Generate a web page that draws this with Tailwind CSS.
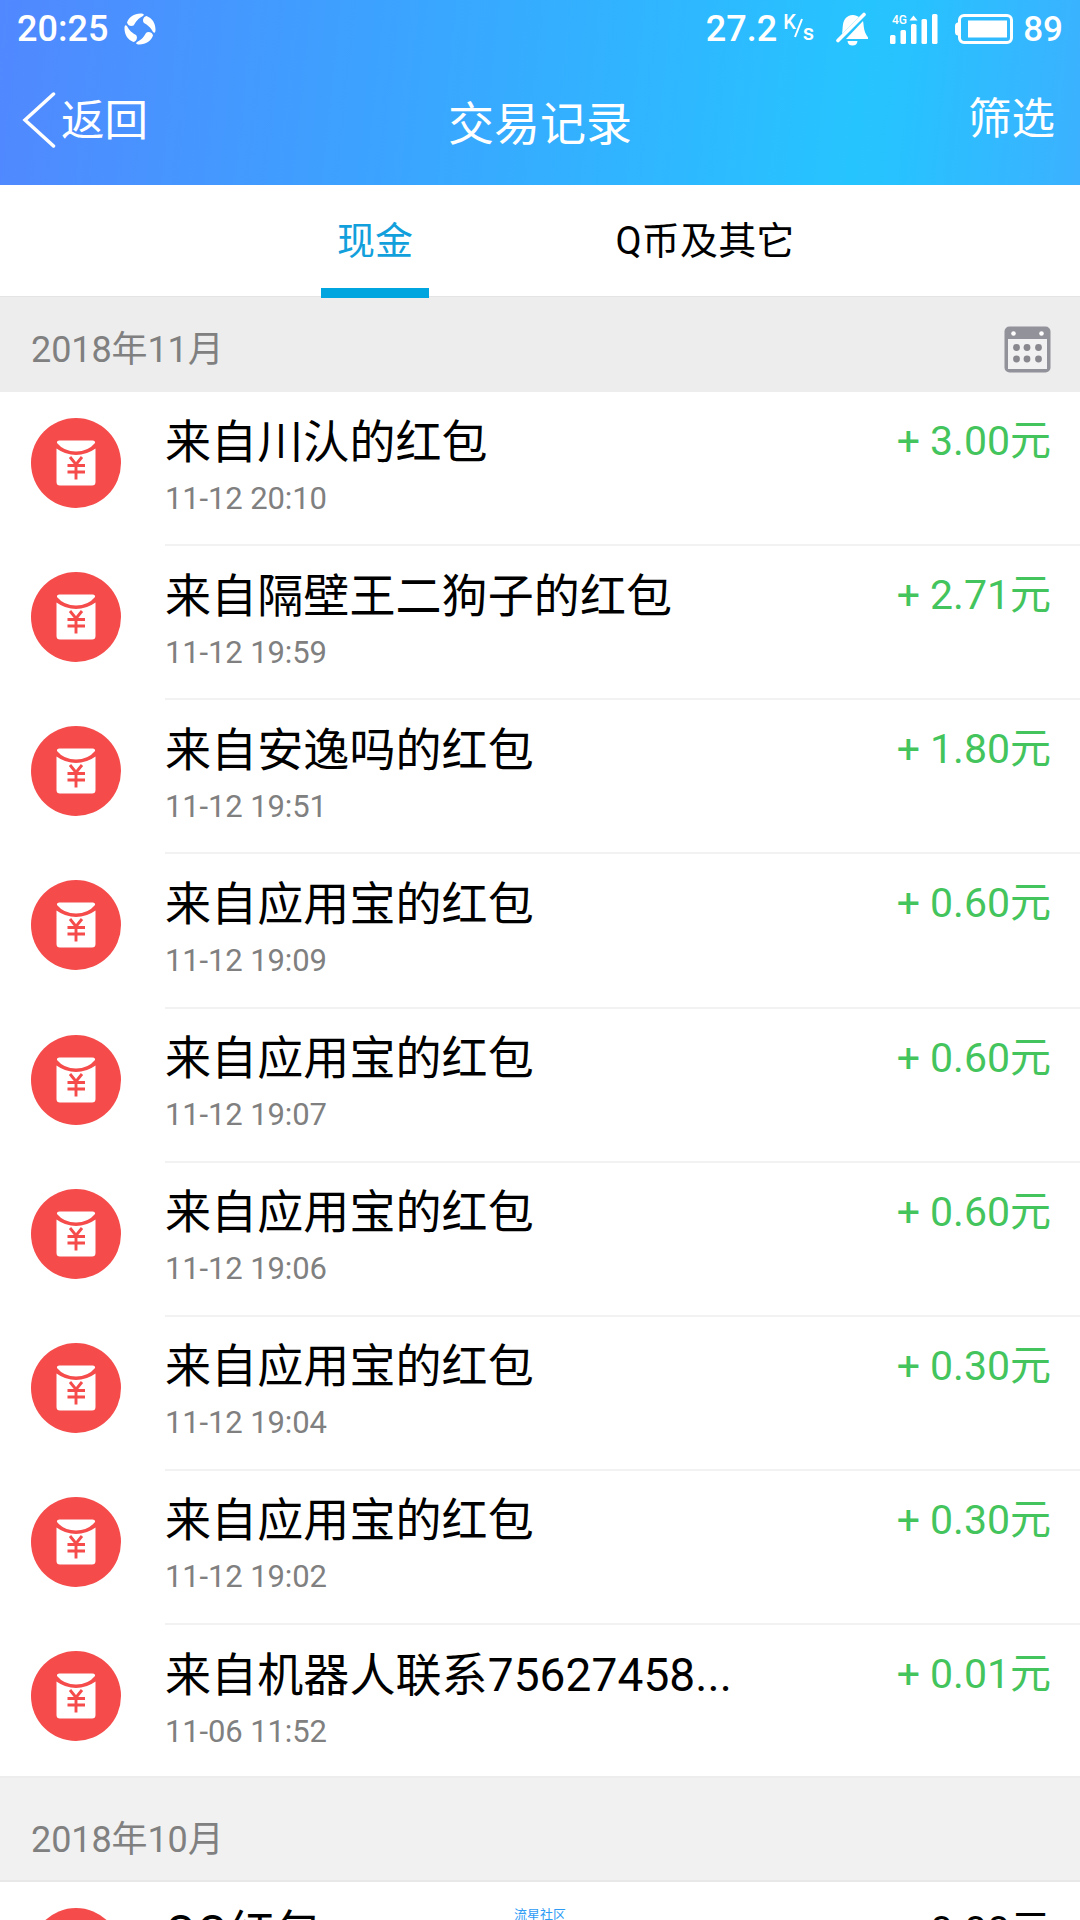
<!DOCTYPE html>
<html lang="zh-CN">
<head>
<meta charset="utf-8">
<title>交易记录</title>
<script src="https://cdn.jsdelivr.net/npm/@tailwindcss/browser@4"></script>
</head>
<body class="h-[1920px] w-[1080px] overflow-hidden bg-white font-['Roboto','Noto_Sans_CJK_SC',sans-serif] text-black">
<svg class="hidden">
  <symbol id="packet" viewBox="0 0 90 90">
    <circle cx="45" cy="45" r="45" fill="#f54b4b"/>
    <path d="M28.500 22.500h33q3 0 2.500 2.500q-7 8.500-19 8.500t-19-8.500q-.5-2.500 2.500-2.500z" fill="#fff"/>
    <path d="M25.500 30.500q9 6.500 19.500 6.500t19.500-6.500v33.500q0 3.500-3.500 3.500h-32q-3.500 0-3.500-3.500z" fill="#fff"/>
    <path d="M39 39l6 7.500l6-7.500M36.500 47.500h17.500M36.500 54h17.500M45 46v15.500" fill="none" stroke="#f54b4b" stroke-width="2.900"/>
  </symbol>
</svg>
<div class="relative flex h-full flex-col">
  <header class="flex h-[185px] shrink-0 flex-col bg-[linear-gradient(96deg,#5188ff_0%,#3da1ff_33%,#26c4ff_79%,#27c2ff_83%,#3cb1ff_100%)] text-white">
    <div class="flex h-[58px] items-center pl-[17px] pr-[18px] text-[36px] leading-none font-medium">
      <span>20:25</span>
      <svg class="ml-[16px] size-[32px]" viewBox="0 0 32 32" fill="#fff">
        <g id="blade"><path d="M3 9.500C5 4 10 .5 16.500 .5C20 .5 20.500 1.500 19 3C14 5.500 12 8.500 10 12C8.500 13.500 4 13.500 3 9.500z"/></g>
        <use href="#blade" transform="rotate(90 16 16)"/><use href="#blade" transform="rotate(180 16 16)"/><use href="#blade" transform="rotate(270 16 16)"/>
      </svg>
      <span class="ml-auto">27.2</span>
      <span class="ml-[6px] flex h-[32px] w-[34px] text-[20px]">
        <span class="-mt-px">K</span>
        <svg class="-ml-[2px] mt-[5px] h-[20px] w-[9px] shrink-0" viewBox="0 0 9 20"><path d="M8 1L1 19" stroke="#fff" stroke-width="2"/></svg>
        <span class="mt-[9px] text-[22px]">s</span>
      </span>
      <svg class="ml-[19px] h-[34px] w-[34px]" viewBox="0 0 34 34" fill="#fff">
        <path d="M6 22C7 18 6 11 9 7C12 3 17 2 21 4L23 5zM27 9C28 13 27 19 32 25.500V27H10z"/>
        <path d="M2 28.500L28 2.500" stroke="#fff" stroke-width="3.600" stroke-linecap="round"/>
        <path d="M11.500 29h10q-.5 4.500-5 4.500t-5-4.500z"/>
      </svg>
      <svg class="ml-[20px] h-[32px] w-[48px]" viewBox="0 0 48 32" fill="#fff">
        <rect x="0" y="22" width="5.500" height="9" rx="1.500"/><rect x="10.500" y="17" width="5.500" height="14" rx="1.500"/><rect x="21" y="11" width="5.500" height="20" rx="1.500"/><rect x="31.500" y="6" width="5.500" height="25" rx="1.500"/><rect x="42" y="1" width="5.500" height="30" rx="1.500"/>
        <path d="M19.500 7.500L23.500 2.500L27.500 7.500z"/>
        <text x="2" y="11" font-size="12.500" font-weight="500" textLength="15" lengthAdjust="spacingAndGlyphs">4G</text>
      </svg>
      <svg class="ml-[17px] h-[30px] w-[58px]" viewBox="0 0 58 30">
        <rect x="4.500" y="1.500" width="52" height="27" rx="4.500" fill="none" stroke="#fff" stroke-width="3"/>
        <rect x="13" y="6.500" width="39" height="17" fill="#fff"/>
        <path d="M4 8.500H2.500Q0 9 0 12v6q0 3 2.500 3.500H4z" fill="#fff"/>
      </svg>
      <span class="-mr-px ml-[10px] text-[35px]">89</span>
    </div>
    <div class="grid h-[127px] grid-cols-3 items-start text-[43.500px] leading-[60px]">
      <div class="flex pl-[22px] pt-[32px]">
        <svg class="mt-[2px] h-[56px] w-[34px]" viewBox="0 0 34 56"><path d="M31.500 2L3 28L31.500 54" fill="none" stroke="#fff" stroke-width="3.500" stroke-linecap="round"/></svg>
        <span class="ml-[5px] mt-[2px]">返回</span>
      </div>
      <h1 class="pt-[36px] text-center text-[46px]">交易记录</h1>
      <span class="pr-[25px] pt-[32px] text-right">筛选</span>
    </div>
  </header>
  <nav class="z-10 flex h-[112px] shrink-0 justify-center border-b border-[#e4e4e4] text-[38px] leading-[56px]">
    <div class="flex w-[330px] flex-col items-center pt-[28px] text-[#12a0dc]">
      <span>现金</span>
      <div class="mt-[19px] h-[10px] w-[108px] shrink-0 bg-[#00a5e0]"></div>
    </div>
    <div class="w-[330px] pt-[28px] text-center tracking-[0.200px]">Q币及其它</div>
  </nav>
  <section class="flex h-[95px] shrink-0 items-center justify-between bg-[#ededed] pl-[31px] pr-[29px] text-[36px] text-[#808080]">
    <span class="mt-[11px] tracking-[-0.100px]">2018年11月</span>
    <svg class="mt-[10px] size-[47px]" viewBox="0 0 47 47">
      <rect x=".5" y=".5" width="46" height="46" rx="5" fill="#92929a"/>
      <rect x="4" y="13" width="39" height="30" fill="#f1f1f2"/>
      <g fill="#fff"><circle cx="9.500" cy="7.500" r="2.300"/><circle cx="37.500" cy="7.500" r="2.300"/></g>
      <g fill="#88888e"><circle cx="12.500" cy="21.500" r="3.400"/><circle cx="23" cy="21.500" r="3.400"/><circle cx="34.500" cy="21.500" r="3.400"/><circle cx="12.500" cy="33" r="3.400"/><circle cx="23" cy="33" r="3.400"/><circle cx="34.500" cy="33" r="3.400"/></g>
    </svg>
  </section>
  <main id="november" class="h-[1384px] shrink-0 overflow-hidden"></main>
  <section class="flex h-[106px] shrink-0 items-center border-y-2 border-t-[#ededed] border-b-[#e8e8e8] bg-[#f1f1f1] pl-[31px] pt-[21px] text-[36px] text-[#808080]">
    <span class="tracking-[-0.100px]">2018年10月</span>
  </section>
  <div id="october" class="h-[38px] overflow-hidden"></div>
  <div class="absolute inset-x-0 top-[1907px] text-center text-[13px] leading-[16px] text-[#2e9bf5]">流星社区</div>
</div>
<script>
  const row = ([name, time, amount, color]) => `
    <div class="flex h-[154.130px] pl-[31px]">
      <svg class="mt-[26px] size-[90px] shrink-0"><use href="#packet"/></svg>
      <div class="ml-[44px] flex grow justify-between border-b-2 border-[#f2f2f2] pr-[29px]">
        <div class="flex flex-col pt-[19.500px]">
          <span class="text-[46px] leading-[60px] tracking-[0.100px]">${name}</span>
          <span class="mt-[7px] text-[31px] leading-[40px] tracking-[-0.120px] text-[#808080]">${time}</span>
        </div>
        <span class="pt-[21px] text-[41px] leading-[56px] ${color}">${amount}</span>
      </div>
    </div>`;
  const green = 'text-[#44c45c]';
  document.getElementById('november').innerHTML = [
    ['来自川汄的红包', '11-12 20:10', '+ 3.00元', green],
    ['来自隔壁王二狗子的红包', '11-12 19:59', '+ 2.71元', green],
    ['来自安逸吗的红包', '11-12 19:51', '+ 1.80元', green],
    ['来自应用宝的红包', '11-12 19:09', '+ 0.60元', green],
    ['来自应用宝的红包', '11-12 19:07', '+ 0.60元', green],
    ['来自应用宝的红包', '11-12 19:06', '+ 0.60元', green],
    ['来自应用宝的红包', '11-12 19:04', '+ 0.30元', green],
    ['来自应用宝的红包', '11-12 19:02', '+ 0.30元', green],
    ['来自机器人联系75627458...', '11-06 11:52', '+ 0.01元', green],
  ].map(row).join('');
  document.getElementById('october').innerHTML = row(['QQ红包', '10-31 20:00', '0.00元', 'text-black']);
</script>
</body>
</html>
